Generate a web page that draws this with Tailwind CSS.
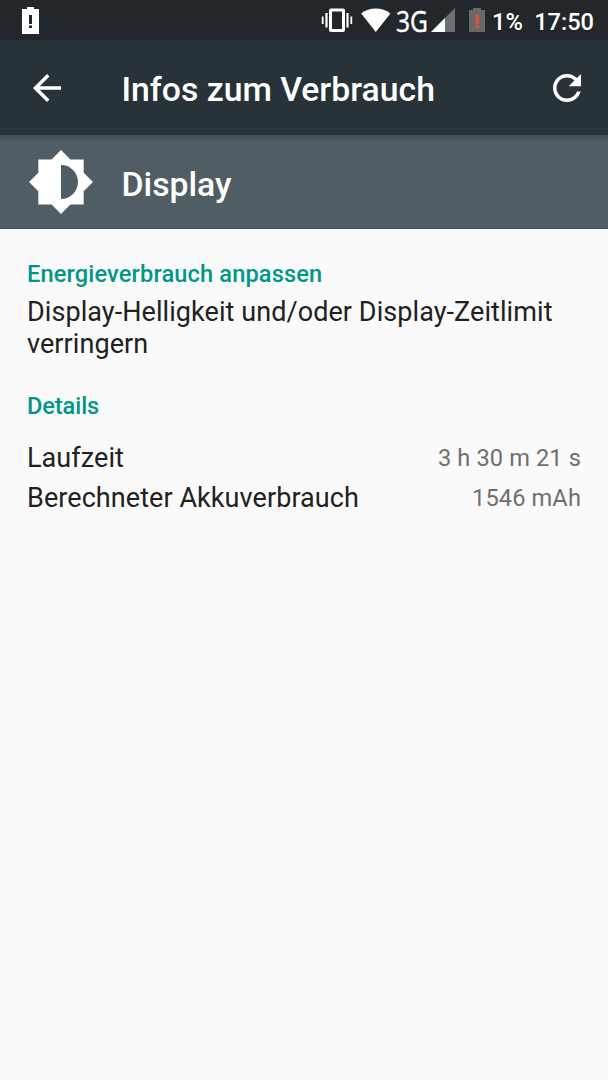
<!DOCTYPE html>
<html lang="de">
<head>
    <meta charset="UTF-8">
    <meta name="viewport" content="width=device-width, initial-scale=1.0">
    <title>Infos zum Verbrauch</title>
    <script src="https://cdn.jsdelivr.net/npm/@tailwindcss/browser@4"></script>
</head>
<body class="bg-[#fafafa] min-h-screen font-['Roboto',sans-serif] overflow-hidden">
    <!-- Status bar -->
    <div class="flex h-10 items-center bg-[#21272a] text-white">
        <svg class="ml-[22px] h-10 w-[17px]" viewBox="0 0 17 40">
            <path fill="#fff" d="M5 7h7v2h5v25H0V9h5z" />
            <path fill="#21272a" d="M7 15h3v9H7zM7 25.500h3v2.500H7z" />
        </svg>
        <svg class="ml-[282px] h-10 w-8" viewBox="0 0 32 40" fill="#fff">
            <path fill-rule="evenodd" d="M10 8.500h12q2 0 2 2v19.500q0 2-2 2H10q-2 0-2-2V10.500q0-2 2-2zM11 11.500v17.500h10V11.500z" />
            <path d="M4.400 13h2.200v14.500H4.400zM.8 16.500h1.800v7.500H.8zM25.400 13h2.200v14.500h-2.200zM29.400 16.500h1.800v7.500h-1.800z" />
        </svg>
        <svg class="ml-2 h-10 w-[31px]" viewBox="0 0 31 40">
            <path fill="#fff" d="M14.800 32L.2 13.500Q6.500 8.500 14.800 8.500T29.400 13.500z" />
        </svg>
        <div class="ml-[4px] mt-0.5 w-[35px]">
            <span class="block origin-left scale-x-82 font-['Open_Sans',sans-serif] text-[30px] leading-10 [-webkit-text-stroke:0.5px_white]">3G</span>
        </div>
        <svg class="h-10 w-6" viewBox="0 0 24 40">
            <path fill="#6c7072" d="M24 8v24H0z" />
            <path fill="#fff" d="M14 18v14H0z" />
        </svg>
        <svg class="ml-[14px] h-10 w-4" viewBox="0 0 16 40">
            <path fill="#666a6c" d="M4 8h8v2h4v22H0V10h4z" />
            <path fill="#e0512d" d="M6.500 14.500h3.500v9H6.500zM6.500 25H10v3H6.500z" />
        </svg>
        <span class="ml-[7px] mt-1 text-[23.600px] font-medium leading-10">1%</span>
        <span class="ml-auto mr-[14px] mt-1 text-[23.600px] font-medium leading-10">17:50</span>
    </div>

    <!-- App bar -->
    <header class="flex h-[95px] items-center bg-[#283339] text-white">
        <svg class="ml-[33px] h-7 w-7" viewBox="4 4 16 16" fill="currentColor">
            <path d="M20 11H7.830l5.590-5.590L12 4l-8 8 8 8 1.410-1.410L7.830 13H20v-2z" />
        </svg>
        <h1 class="ml-[60.500px] mt-1 text-[33.750px] font-medium leading-10">Infos zum Verbrauch</h1>
        <svg class="ml-auto mr-[27px] h-7 w-7" viewBox="4 4 16 16" fill="currentColor">
            <path d="M17.650 6.350C16.200 4.900 14.210 4 12 4c-4.420 0-7.990 3.580-7.990 8s3.570 8 7.990 8c3.730 0 6.840-2.550 7.730-6h-2.080c-.82 2.330-3.040 4-5.650 4-3.310 0-6-2.690-6-6s2.690-6 6-6c1.660 0 3.140.69 4.220 1.780L13 11h7V4l-2.350 2.350z" />
        </svg>
    </header>

    <!-- Entry header -->
    <section class="flex h-[94px] items-center border-b border-[#465359] bg-[#505d64] bg-linear-to-b from-[#454f54] to-[#505d64] to-8% text-white">
        <svg class="ml-[29px] mt-px h-16 w-16" viewBox="0 0 64 64">
            <path fill="#fff" d="M32 0l9.400 9.400H54.700V22.700L64 32l-9.300 9.300V54.600H41.400L32 64l-9.400-9.400H9.300V41.300L0 32l9.300-9.300V9.400H22.600z" />
            <path fill="#505d64" d="M32 15c9.400 0 17 7.600 17 17s-7.600 17-17 17z" />
        </svg>
        <h2 class="ml-[28.500px] mt-[7px] text-[33.750px] font-medium leading-10">Display</h2>
    </section>

    <!-- Content -->
    <main class="px-[27px] pt-[29px] text-[#212121]">
        <h3 class="text-[23.600px] font-medium leading-8 tracking-[0.140px] text-[#009688]">Energieverbrauch anpassen</h3>
        <p class="mt-1.5 text-[27px] leading-8 tracking-[0.070px]">Display-Helligkeit und/oder Display-Zeitlimit verringern</p>
        <h3 class="mt-[30px] text-[23.600px] font-medium leading-8 tracking-[-0.100px] text-[#009688]">Details</h3>
        <dl class="mt-4">
            <div class="flex h-10 items-center justify-between">
                <dt class="text-[27px] leading-8 tracking-[0.070px]">Laufzeit</dt>
                <dd class="text-[23.600px] leading-8 tracking-[0.120px] text-[#6f6f6f]">3 h 30 m 21 s</dd>
            </div>
            <div class="flex h-10 items-center justify-between">
                <dt class="text-[27px] leading-8 tracking-[0.070px]">Berechneter Akkuverbrauch</dt>
                <dd class="text-[23.600px] leading-8 tracking-[0.120px] text-[#6f6f6f]">1546 mAh</dd>
            </div>
        </dl>
    </main>
</body>
</html>
